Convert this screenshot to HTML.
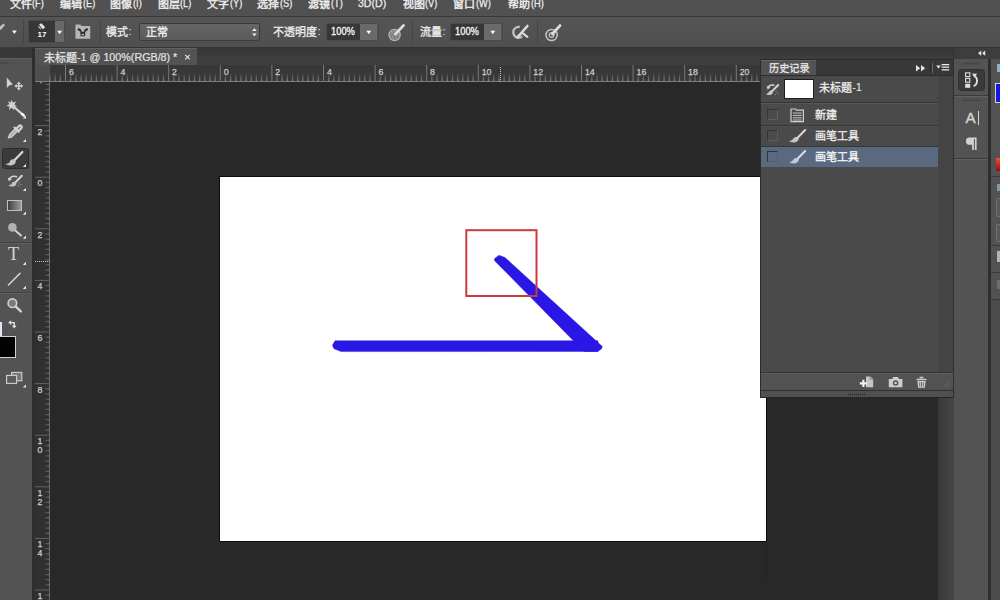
<!DOCTYPE html><html lang="zh"><head><meta charset="utf-8"><title>Photoshop</title><style>
*{margin:0;padding:0;box-sizing:border-box}
html,body{width:1000px;height:600px;overflow:hidden;background:#282828}
body{position:relative;font-family:"Liberation Sans",sans-serif;color:#e6e6e6;font-size:11px}
.a{position:absolute}
.t{position:absolute;overflow:visible}
.lt{position:absolute;white-space:nowrap;line-height:1}
.t text{font-family:"Liberation Sans","Noto Sans CJK SC",sans-serif}
</style></head><body>
<div class="a" style="left:0px;top:0px;width:1000px;height:16px;background:#515151;"></div>
<div class="a" style="left:0px;top:15.6px;width:1000px;height:1.2px;background:#383838;"></div>
<svg class="t" aria-label="文件" style="left:9.80px;top:-2.80px" width="24.00" height="15.40" viewBox="0 -11.00 24.00 15.40" ><text x="0" y="0" font-size="11" fill="#ececec" stroke="#ececec" stroke-width="0.45">文件</text></svg>
<div class="lt" style="left:32.4px;top:-1.755px;font-size:11px;color:#ececec;-webkit-text-stroke:0.3px #ececec;transform:scaleX(0.84);transform-origin:0 0">(F)</div>
<svg class="t" aria-label="编辑" style="left:60.00px;top:-2.80px" width="24.00" height="15.40" viewBox="0 -11.00 24.00 15.40" ><text x="0" y="0" font-size="11" fill="#ececec" stroke="#ececec" stroke-width="0.45">编辑</text></svg>
<div class="lt" style="left:82.6px;top:-1.755px;font-size:11px;color:#ececec;-webkit-text-stroke:0.3px #ececec;transform:scaleX(0.84);transform-origin:0 0">(E)</div>
<svg class="t" aria-label="图像" style="left:110.00px;top:-2.80px" width="24.00" height="15.40" viewBox="0 -11.00 24.00 15.40" ><text x="0" y="0" font-size="11" fill="#ececec" stroke="#ececec" stroke-width="0.45">图像</text></svg>
<div class="lt" style="left:132.6px;top:-1.755px;font-size:11px;color:#ececec;-webkit-text-stroke:0.3px #ececec;transform:scaleX(0.84);transform-origin:0 0">(I)</div>
<svg class="t" aria-label="图层" style="left:157.50px;top:-2.80px" width="24.00" height="15.40" viewBox="0 -11.00 24.00 15.40" ><text x="0" y="0" font-size="11" fill="#ececec" stroke="#ececec" stroke-width="0.45">图层</text></svg>
<div class="lt" style="left:180.1px;top:-1.755px;font-size:11px;color:#ececec;-webkit-text-stroke:0.3px #ececec;transform:scaleX(0.84);transform-origin:0 0">(L)</div>
<svg class="t" aria-label="文字" style="left:207.00px;top:-2.80px" width="24.00" height="15.40" viewBox="0 -11.00 24.00 15.40" ><text x="0" y="0" font-size="11" fill="#ececec" stroke="#ececec" stroke-width="0.45">文字</text></svg>
<div class="lt" style="left:229.6px;top:-1.755px;font-size:11px;color:#ececec;-webkit-text-stroke:0.3px #ececec;transform:scaleX(0.84);transform-origin:0 0">(Y)</div>
<svg class="t" aria-label="选择" style="left:257.00px;top:-2.80px" width="24.00" height="15.40" viewBox="0 -11.00 24.00 15.40" ><text x="0" y="0" font-size="11" fill="#ececec" stroke="#ececec" stroke-width="0.45">选择</text></svg>
<div class="lt" style="left:279.6px;top:-1.755px;font-size:11px;color:#ececec;-webkit-text-stroke:0.3px #ececec;transform:scaleX(0.84);transform-origin:0 0">(S)</div>
<svg class="t" aria-label="滤镜" style="left:308.00px;top:-2.80px" width="24.00" height="15.40" viewBox="0 -11.00 24.00 15.40" ><text x="0" y="0" font-size="11" fill="#ececec" stroke="#ececec" stroke-width="0.45">滤镜</text></svg>
<div class="lt" style="left:330.6px;top:-1.755px;font-size:11px;color:#ececec;-webkit-text-stroke:0.3px #ececec;transform:scaleX(0.84);transform-origin:0 0">(T)</div>
<div class="lt" style="left:358px;top:-1.755px;font-size:11px;color:#ececec;-webkit-text-stroke:0.3px #ececec;transform:scaleX(0.96);transform-origin:0 0">3D(D)</div>
<svg class="t" aria-label="视图" style="left:402.50px;top:-2.80px" width="24.00" height="15.40" viewBox="0 -11.00 24.00 15.40" ><text x="0" y="0" font-size="11" fill="#ececec" stroke="#ececec" stroke-width="0.45">视图</text></svg>
<div class="lt" style="left:425.1px;top:-1.755px;font-size:11px;color:#ececec;-webkit-text-stroke:0.3px #ececec;transform:scaleX(0.84);transform-origin:0 0">(V)</div>
<svg class="t" aria-label="窗口" style="left:453.00px;top:-2.80px" width="24.00" height="15.40" viewBox="0 -11.00 24.00 15.40" ><text x="0" y="0" font-size="11" fill="#ececec" stroke="#ececec" stroke-width="0.45">窗口</text></svg>
<div class="lt" style="left:475.6px;top:-1.755px;font-size:11px;color:#ececec;-webkit-text-stroke:0.3px #ececec;transform:scaleX(0.84);transform-origin:0 0">(W)</div>
<svg class="t" aria-label="帮助" style="left:508.00px;top:-2.80px" width="24.00" height="15.40" viewBox="0 -11.00 24.00 15.40" ><text x="0" y="0" font-size="11" fill="#ececec" stroke="#ececec" stroke-width="0.45">帮助</text></svg>
<div class="lt" style="left:530.6px;top:-1.755px;font-size:11px;color:#ececec;-webkit-text-stroke:0.3px #ececec;transform:scaleX(0.84);transform-origin:0 0">(H)</div>
<div class="a" style="left:0px;top:16.8px;width:1000px;height:31px;background:linear-gradient(#555,#4f4f4f);"></div>
<div class="a" style="left:0px;top:46.6px;width:1000px;height:1.2px;background:#333;"></div>
<div class="a" style="left:22.5px;top:20px;width:1px;height:24px;background:#464646;"></div>
<div class="a" style="left:28px;top:20px;width:37px;height:23px;background:transparent;border:1px solid #494949;border-radius:2px"></div>
<div class="a" style="left:29px;top:21px;width:26px;height:21px;background:#373737;"></div>
<div class="lt" style="left:37.6px;top:31.26px;font-size:8px;color:#fff;font-weight:bold">17</div>
<div class="a" style="left:55px;top:21px;width:9px;height:21px;background:#696969;"></div>
<div class="a" style="left:99.5px;top:20px;width:1px;height:24px;background:#464646;"></div>
<svg class="t" aria-label="模式" style="left:106.00px;top:25.00px" width="24.00" height="15.40" viewBox="0 -11.00 24.00 15.40" ><text x="0" y="0" font-size="11" fill="#ececec" stroke="#ececec" stroke-width="0.3">模式</text></svg>
<div class="lt" style="left:128.6px;top:26.045px;font-size:11px;color:#ececec;">:</div>
<div class="a" style="left:139px;top:23px;width:121px;height:18px;background:linear-gradient(#666,#5a5a5a);border:1px solid #3b3b3b;border-radius:2px"></div>
<svg class="t" aria-label="正常" style="left:146.20px;top:25.00px" width="24.00" height="15.40" viewBox="0 -11.00 24.00 15.40" ><text x="0" y="0" font-size="11" fill="#f0f0f0" stroke="#f0f0f0" stroke-width="0.3">正常</text></svg>
<svg class="t" aria-label="不透明度" style="left:272.80px;top:25.00px" width="46.00" height="15.40" viewBox="0 -11.00 46.00 15.40" ><text x="0" y="0" font-size="11" fill="#ececec" stroke="#ececec" stroke-width="0.3">不透明度</text></svg>
<div class="lt" style="left:317.8px;top:26.045px;font-size:11px;color:#ececec;">:</div>
<div class="a" style="left:326.2px;top:22.5px;width:52.4px;height:18.8px;background:transparent;border:1px solid #4a4a4a;border-radius:2px"></div>
<div class="a" style="left:327.2px;top:23.5px;width:33px;height:16.8px;background:#373737;"></div>
<div class="lt" style="left:331.4px;top:26.688px;font-size:10.4px;color:#f8f8f8;-webkit-text-stroke:0.3px #f8f8f8;transform:scaleX(0.9);transform-origin:0 0">100%</div>
<div class="a" style="left:360.2px;top:23.5px;width:17.2px;height:16.8px;background:#6a6a6a;"></div>
<div class="a" style="left:412px;top:20px;width:1px;height:24px;background:#464646;"></div>
<svg class="t" aria-label="流量" style="left:420.00px;top:25.00px" width="24.00" height="15.40" viewBox="0 -11.00 24.00 15.40" ><text x="0" y="0" font-size="11" fill="#ececec" stroke="#ececec" stroke-width="0.3">流量</text></svg>
<div class="lt" style="left:442.6px;top:26.045px;font-size:11px;color:#ececec;">:</div>
<div class="a" style="left:450.2px;top:22.5px;width:52.4px;height:18.8px;background:transparent;border:1px solid #4a4a4a;border-radius:2px"></div>
<div class="a" style="left:451.2px;top:23.5px;width:33px;height:16.8px;background:#373737;"></div>
<div class="lt" style="left:455.4px;top:26.688px;font-size:10.4px;color:#f8f8f8;-webkit-text-stroke:0.3px #f8f8f8;transform:scaleX(0.9);transform-origin:0 0">100%</div>
<div class="a" style="left:484.2px;top:23.5px;width:17.2px;height:16.8px;background:#6a6a6a;"></div>
<div class="a" style="left:537px;top:20px;width:1px;height:24px;background:#464646;"></div>
<div class="a" style="left:0px;top:47.8px;width:1000px;height:17.2px;background:linear-gradient(#363636,#3e3e3e 60%);"></div>
<div class="a" style="left:35px;top:48px;width:162px;height:17px;background:#535353;border-top:1px solid #626262"></div>
<svg class="t" aria-label="未标题" style="left:43.60px;top:50.90px" width="35.00" height="15.40" viewBox="0 -11.00 35.00 15.40" ><text x="0" y="0" font-size="11" fill="#e4e4e4" stroke="#e4e4e4" stroke-width="0.3">未标题</text></svg>
<div class="lt" style="left:77.4px;top:51.945px;font-size:11px;color:#e4e4e4;-webkit-text-stroke:0.2px #e4e4e4;transform:scaleX(0.975);transform-origin:0 0">-1 @ 100%(RGB/8) *</div>
<div class="a" style="left:0px;top:47px;width:32px;height:12px;background:#393939;"></div>
<div class="a" style="left:0px;top:58px;width:32px;height:542px;background:#535353;"></div>
<div class="a" style="left:0px;top:58px;width:32px;height:1px;background:#5f5f5f;"></div>
<div class="a" style="left:32px;top:47px;width:3px;height:553px;background:#2e2e2e;"></div>
<div class="a" style="left:1.5px;top:147.5px;width:27.5px;height:21px;background:#3b3b3b;border:1px solid #2d2d2d;border-radius:2.5px"></div>
<div class="a" style="left:0px;top:242px;width:32px;height:1px;background:#424242;"></div>
<div class="a" style="left:0px;top:243px;width:32px;height:1px;background:#5d5d5d;"></div>
<div class="a" style="left:0px;top:291.5px;width:32px;height:1px;background:#424242;"></div>
<div class="a" style="left:0px;top:292.5px;width:32px;height:1px;background:#5d5d5d;"></div>
<div class="a" style="left:7px;top:200px;width:15px;height:11.4px;border:1px solid #bebebe;background:linear-gradient(90deg,#404040,#9c9c9c)"></div>
<div class="lt" style="left:8.2px;top:245.4px;font-family:'Liberation Serif',serif;font-size:18.5px;color:#d6d6d6;transform:scaleX(0.98);transform-origin:0 0">T</div>
<div class="a" style="left:0px;top:321.6px;width:2px;height:22px;background:#e6e2f6;"></div>
<div class="a" style="left:-1px;top:336px;width:16.8px;height:22.4px;background:#020202;border:1px solid #d2d0c4"></div>
<div class="a" style="left:35px;top:65px;width:903px;height:17px;background:#383838;"></div>
<div class="a" style="left:35px;top:65px;width:15px;height:535px;background:#303030;"></div>
<div class="a" style="left:35px;top:65px;width:15px;height:16px;background:#4e4e4e;"></div>
<div class="a" style="left:35px;top:81px;width:903px;height:1px;background:#7e7e7e;"></div>
<div class="a" style="left:49px;top:82px;width:1px;height:518px;background:#6c6c6c;"></div>
<svg class="t" style="left:50px;top:65px" width="888" height="17" viewBox="50 65 888 17"><defs><linearGradient id="gh" gradientUnits="userSpaceOnUse" x1="0" y1="72" x2="0" y2="81"><stop offset="0" stop-color="#6a6a6a" stop-opacity="0"/><stop offset="1" stop-color="#808080"/></linearGradient></defs><path d="M65.50 65V82M117.10 65V82M168.70 65V82M220.30 65V82M271.90 65V82M323.50 65V82M375.10 65V82M426.70 65V82M478.30 65V82M529.90 65V82M581.50 65V82M633.10 65V82M684.70 65V82M736.30 65V82M787.90 65V82M839.50 65V82M891.10 65V82" stroke="#787878" stroke-width="1" fill="none"/><path d="M91.30 72V82M142.90 72V82M194.50 72V82M246.10 72V82M297.70 72V82M349.30 72V82M400.90 72V82M452.50 72V82M504.10 72V82M555.70 72V82M607.30 72V82M658.90 72V82M710.50 72V82M762.10 72V82M813.70 72V82M865.30 72V82M916.90 72V82" stroke="url(#gh)" stroke-width="1.3" fill="none"/><path d="M50.02 73.5V82M55.18 73.5V82M60.34 73.5V82M70.66 73.5V82M75.82 73.5V82M80.98 73.5V82M86.14 73.5V82M96.46 73.5V82M101.62 73.5V82M106.78 73.5V82M111.94 73.5V82M122.26 73.5V82M127.42 73.5V82M132.58 73.5V82M137.74 73.5V82M148.06 73.5V82M153.22 73.5V82M158.38 73.5V82M163.54 73.5V82M173.86 73.5V82M179.02 73.5V82M184.18 73.5V82M189.34 73.5V82M199.66 73.5V82M204.82 73.5V82M209.98 73.5V82M215.14 73.5V82M225.46 73.5V82M230.62 73.5V82M235.78 73.5V82M240.94 73.5V82M251.26 73.5V82M256.42 73.5V82M261.58 73.5V82M266.74 73.5V82M277.06 73.5V82M282.22 73.5V82M287.38 73.5V82M292.54 73.5V82M302.86 73.5V82M308.02 73.5V82M313.18 73.5V82M318.34 73.5V82M328.66 73.5V82M333.82 73.5V82M338.98 73.5V82M344.14 73.5V82M354.46 73.5V82M359.62 73.5V82M364.78 73.5V82M369.94 73.5V82M380.26 73.5V82M385.42 73.5V82M390.58 73.5V82M395.74 73.5V82M406.06 73.5V82M411.22 73.5V82M416.38 73.5V82M421.54 73.5V82M431.86 73.5V82M437.02 73.5V82M442.18 73.5V82M447.34 73.5V82M457.66 73.5V82M462.82 73.5V82M467.98 73.5V82M473.14 73.5V82M483.46 73.5V82M488.62 73.5V82M493.78 73.5V82M498.94 73.5V82M509.26 73.5V82M514.42 73.5V82M519.58 73.5V82M524.74 73.5V82M535.06 73.5V82M540.22 73.5V82M545.38 73.5V82M550.54 73.5V82M560.86 73.5V82M566.02 73.5V82M571.18 73.5V82M576.34 73.5V82M586.66 73.5V82M591.82 73.5V82M596.98 73.5V82M602.14 73.5V82M612.46 73.5V82M617.62 73.5V82M622.78 73.5V82M627.94 73.5V82M638.26 73.5V82M643.42 73.5V82M648.58 73.5V82M653.74 73.5V82M664.06 73.5V82M669.22 73.5V82M674.38 73.5V82M679.54 73.5V82M689.86 73.5V82M695.02 73.5V82M700.18 73.5V82M705.34 73.5V82M715.66 73.5V82M720.82 73.5V82M725.98 73.5V82M731.14 73.5V82M741.46 73.5V82M746.62 73.5V82M751.78 73.5V82M756.94 73.5V82M767.26 73.5V82M772.42 73.5V82M777.58 73.5V82M782.74 73.5V82M793.06 73.5V82M798.22 73.5V82M803.38 73.5V82M808.54 73.5V82M818.86 73.5V82M824.02 73.5V82M829.18 73.5V82M834.34 73.5V82M844.66 73.5V82M849.82 73.5V82M854.98 73.5V82M860.14 73.5V82M870.46 73.5V82M875.62 73.5V82M880.78 73.5V82M885.94 73.5V82M896.26 73.5V82M901.42 73.5V82M906.58 73.5V82M911.74 73.5V82M922.06 73.5V82M927.22 73.5V82M932.38 73.5V82" stroke="url(#gh)" stroke-width="1.3" fill="none"/><path d="M500.5 67V82" stroke="#c4c4c4" stroke-width="1" stroke-dasharray="1 1" fill="none" shape-rendering="crispEdges"/></svg>
<div class="lt" style="left:68.9px;top:67.836px;font-size:8.8px;color:#cecece;-webkit-text-stroke:0.25px #cecece">6</div>
<div class="lt" style="left:120.5px;top:67.836px;font-size:8.8px;color:#cecece;-webkit-text-stroke:0.25px #cecece">4</div>
<div class="lt" style="left:172.1px;top:67.836px;font-size:8.8px;color:#cecece;-webkit-text-stroke:0.25px #cecece">2</div>
<div class="lt" style="left:223.7px;top:67.836px;font-size:8.8px;color:#cecece;-webkit-text-stroke:0.25px #cecece">0</div>
<div class="lt" style="left:275.3px;top:67.836px;font-size:8.8px;color:#cecece;-webkit-text-stroke:0.25px #cecece">2</div>
<div class="lt" style="left:326.9px;top:67.836px;font-size:8.8px;color:#cecece;-webkit-text-stroke:0.25px #cecece">4</div>
<div class="lt" style="left:378.5px;top:67.836px;font-size:8.8px;color:#cecece;-webkit-text-stroke:0.25px #cecece">6</div>
<div class="lt" style="left:430.1px;top:67.836px;font-size:8.8px;color:#cecece;-webkit-text-stroke:0.25px #cecece">8</div>
<div class="lt" style="left:481.7px;top:67.836px;font-size:8.8px;color:#cecece;-webkit-text-stroke:0.25px #cecece">10</div>
<div class="lt" style="left:533.3px;top:67.836px;font-size:8.8px;color:#cecece;-webkit-text-stroke:0.25px #cecece">12</div>
<div class="lt" style="left:584.9px;top:67.836px;font-size:8.8px;color:#cecece;-webkit-text-stroke:0.25px #cecece">14</div>
<div class="lt" style="left:636.5px;top:67.836px;font-size:8.8px;color:#cecece;-webkit-text-stroke:0.25px #cecece">16</div>
<div class="lt" style="left:688.1px;top:67.836px;font-size:8.8px;color:#cecece;-webkit-text-stroke:0.25px #cecece">18</div>
<div class="lt" style="left:739.7px;top:67.836px;font-size:8.8px;color:#cecece;-webkit-text-stroke:0.25px #cecece">20</div>
<svg class="t" style="left:35px;top:82px" width="15" height="518" viewBox="35 82 15 518"><defs><linearGradient id="gv" gradientUnits="userSpaceOnUse" x1="43" y1="0" x2="49" y2="0"><stop offset="0" stop-color="#606060" stop-opacity="0"/><stop offset="1" stop-color="#6c6c6c"/></linearGradient></defs><path d="M35 125.60H50M35 177.20H50M35 228.80H50M35 280.40H50M35 332.00H50M35 383.60H50M35 435.20H50M35 486.80H50M35 538.40H50M35 590.00H50" stroke="#636363" stroke-width="1" fill="none"/><path d="M43 99.80H50M43 151.40H50M43 203.00H50M43 254.60H50M43 306.20H50M43 357.80H50M43 409.40H50M43 461.00H50M43 512.60H50M43 564.20H50" stroke="url(#gv)" stroke-width="1.3" fill="none"/><path d="M44.5 84.32H50M44.5 89.48H50M44.5 94.64H50M44.5 104.96H50M44.5 110.12H50M44.5 115.28H50M44.5 120.44H50M44.5 130.76H50M44.5 135.92H50M44.5 141.08H50M44.5 146.24H50M44.5 156.56H50M44.5 161.72H50M44.5 166.88H50M44.5 172.04H50M44.5 182.36H50M44.5 187.52H50M44.5 192.68H50M44.5 197.84H50M44.5 208.16H50M44.5 213.32H50M44.5 218.48H50M44.5 223.64H50M44.5 233.96H50M44.5 239.12H50M44.5 244.28H50M44.5 249.44H50M44.5 259.76H50M44.5 264.92H50M44.5 270.08H50M44.5 275.24H50M44.5 285.56H50M44.5 290.72H50M44.5 295.88H50M44.5 301.04H50M44.5 311.36H50M44.5 316.52H50M44.5 321.68H50M44.5 326.84H50M44.5 337.16H50M44.5 342.32H50M44.5 347.48H50M44.5 352.64H50M44.5 362.96H50M44.5 368.12H50M44.5 373.28H50M44.5 378.44H50M44.5 388.76H50M44.5 393.92H50M44.5 399.08H50M44.5 404.24H50M44.5 414.56H50M44.5 419.72H50M44.5 424.88H50M44.5 430.04H50M44.5 440.36H50M44.5 445.52H50M44.5 450.68H50M44.5 455.84H50M44.5 466.16H50M44.5 471.32H50M44.5 476.48H50M44.5 481.64H50M44.5 491.96H50M44.5 497.12H50M44.5 502.28H50M44.5 507.44H50M44.5 517.76H50M44.5 522.92H50M44.5 528.08H50M44.5 533.24H50M44.5 543.56H50M44.5 548.72H50M44.5 553.88H50M44.5 559.04H50M44.5 569.36H50M44.5 574.52H50M44.5 579.68H50M44.5 584.84H50M44.5 595.16H50" stroke="url(#gv)" stroke-width="1.3" fill="none"/><path d="M35 261.5H50" stroke="#c4c4c4" stroke-width="1" stroke-dasharray="1 1" fill="none" shape-rendering="crispEdges"/></svg>
<div class="a" style="left:35px;top:82px;width:14px;height:518px;overflow:hidden">
<div class="lt" style="left:2.4px;top:-5.964px;font-size:8.8px;color:#cecece;-webkit-text-stroke:0.25px #cecece">4</div>
<div class="lt" style="left:2.4px;top:45.636px;font-size:8.8px;color:#cecece;-webkit-text-stroke:0.25px #cecece">2</div>
<div class="lt" style="left:2.4px;top:97.236px;font-size:8.8px;color:#cecece;-webkit-text-stroke:0.25px #cecece">0</div>
<div class="lt" style="left:2.4px;top:148.836px;font-size:8.8px;color:#cecece;-webkit-text-stroke:0.25px #cecece">2</div>
<div class="lt" style="left:2.4px;top:200.436px;font-size:8.8px;color:#cecece;-webkit-text-stroke:0.25px #cecece">4</div>
<div class="lt" style="left:2.4px;top:252.036px;font-size:8.8px;color:#cecece;-webkit-text-stroke:0.25px #cecece">6</div>
<div class="lt" style="left:2.4px;top:303.636px;font-size:8.8px;color:#cecece;-webkit-text-stroke:0.25px #cecece">8</div>
<div class="lt" style="left:2.4px;top:355.236px;font-size:8.8px;color:#cecece;-webkit-text-stroke:0.25px #cecece">1</div>
<div class="lt" style="left:2.4px;top:364.236px;font-size:8.8px;color:#cecece;-webkit-text-stroke:0.25px #cecece">0</div>
<div class="lt" style="left:2.4px;top:406.836px;font-size:8.8px;color:#cecece;-webkit-text-stroke:0.25px #cecece">1</div>
<div class="lt" style="left:2.4px;top:415.836px;font-size:8.8px;color:#cecece;-webkit-text-stroke:0.25px #cecece">2</div>
<div class="lt" style="left:2.4px;top:458.436px;font-size:8.8px;color:#cecece;-webkit-text-stroke:0.25px #cecece">1</div>
<div class="lt" style="left:2.4px;top:467.436px;font-size:8.8px;color:#cecece;-webkit-text-stroke:0.25px #cecece">4</div>
<div class="lt" style="left:2.4px;top:510.036px;font-size:8.8px;color:#cecece;-webkit-text-stroke:0.25px #cecece">1</div>
<div class="lt" style="left:2.4px;top:519.036px;font-size:8.8px;color:#cecece;-webkit-text-stroke:0.25px #cecece">6</div>
</div>
<div class="a" style="left:219px;top:176px;width:548px;height:366px;background:#0c0c0c;"></div>
<div class="a" style="left:766px;top:542px;width:1px;height:38px;background:#222;"></div>
<div class="a" style="left:220px;top:177px;width:546px;height:364px;background:#fff;"></div>
<svg class="t" style="left:220px;top:177px" width="546" height="364" viewBox="220 177 546 364"><path d="M335 340.7 L332.4 345.2 L334 348.8 L341 351.6 L598 351.5 L598 340.7z" fill="#2a17e6" stroke="#2a17e6" stroke-width="0.4" stroke-linejoin="round"/><path d="M499 255.2 L505 257.5 L602.4 346.6 L601.4 349 L597.8 351.5 L584 351.5 L494.3 260.4 L494.7 258.4z" fill="#2a17e6" stroke="#2a17e6" stroke-width="0.4" stroke-linejoin="round"/><rect x="466.3" y="230.2" width="70.2" height="65.8" fill="none" stroke="#cb3b40" stroke-width="2"/></svg>
<div class="a" style="left:938px;top:59px;width:16px;height:541px;background:linear-gradient(90deg,#383838,#464646);"></div>
<div class="a" style="left:953px;top:47.8px;width:47px;height:11.2px;background:#3d3d3d;"></div>
<div class="a" style="left:954px;top:59px;width:34px;height:541px;background:#535353;"></div>
<div class="a" style="left:988px;top:59px;width:3px;height:541px;background:#2e2e2e;"></div>
<div class="a" style="left:991px;top:59px;width:9px;height:541px;background:#4c4c4c;"></div>
<div class="a" style="left:991px;top:59px;width:9px;height:240px;background:#525252;"></div>
<div class="a" style="left:991px;top:299px;width:9px;height:1px;background:#3a3a3a;"></div>
<div class="a" style="left:953px;top:47px;width:1px;height:351px;background:#2f2f2f;"></div>
<div class="a" style="left:958px;top:69px;width:26.6px;height:21.8px;background:#3a3a3a;border-radius:3.5px;border:1px solid #303030"></div>
<div class="a" style="left:954px;top:94.6px;width:34px;height:1px;background:#3a3a3a;"></div>
<div class="a" style="left:954px;top:95.6px;width:34px;height:1px;background:#616161;"></div>
<div class="a" style="left:954px;top:157.6px;width:34px;height:1px;background:#3a3a3a;"></div>
<div class="a" style="left:954px;top:158.6px;width:34px;height:1px;background:#616161;"></div>
<div class="lt" style="left:965.4px;top:109.644px;font-size:15.2px;color:#d2d2d2;-webkit-text-stroke:0.45px #d2d2d2">A</div>
<div class="a" style="left:977.6px;top:111.4px;width:1.1px;height:13.4px;background:#d4d4d4;"></div>
<div class="a" style="left:996.6px;top:64px;width:3.4px;height:8px;background:#8eb0c8;"></div>
<div class="a" style="left:995px;top:83.2px;width:5px;height:19.6px;background:#1616e2;border:1px solid #d6d6c6;border-right:0"></div>
<div class="a" style="left:996px;top:158px;width:4px;height:13px;background:linear-gradient(#e8503c,#9c0c0c);"></div>
<div class="a" style="left:991px;top:176px;width:9px;height:1px;background:#3a3a3a;"></div>
<div class="a" style="left:991px;top:245px;width:9px;height:1px;background:#3a3a3a;"></div>
<div class="a" style="left:991px;top:272px;width:9px;height:1px;background:#3a3a3a;"></div>
<div class="a" style="left:996.6px;top:184px;width:3.4px;height:7px;background:#7d96a8;"></div>
<div class="a" style="left:995.6px;top:197.6px;width:6px;height:19px;background:#595959;border:1px solid #727272;border-radius:1.5px"></div>
<div class="a" style="left:995.6px;top:223.6px;width:6px;height:18px;background:#595959;border:1px solid #727272;border-radius:1.5px"></div>
<div class="a" style="left:997px;top:250.6px;width:3px;height:11px;background:#b4b4b4;"></div>
<div class="a" style="left:997.4px;top:280px;width:2.6px;height:9px;background:#6e6e6e;"></div>
<div class="a" style="left:761px;top:59px;width:192px;height:339px;background:#4a4a4a;"></div>
<div class="a" style="left:760px;top:59px;width:1px;height:339px;background:#2c2c2c;"></div>
<div class="a" style="left:761px;top:59px;width:192px;height:17px;background:#383838;border-top:1px solid #2a2a2a"></div>
<div class="a" style="left:761px;top:60px;width:55px;height:16px;background:#535353;border-top:1px solid #646464"></div>
<svg class="t" aria-label="历史记录" style="left:769.40px;top:62.20px" width="42.80" height="14.28" viewBox="0 -10.20 42.80 14.28" ><text x="0" y="0" font-size="10.2" fill="#e6e6e6" stroke="#e6e6e6" stroke-width="0.3">历史记录</text></svg>
<div class="a" style="left:930.4px;top:63px;width:1px;height:10px;background:#2a2a2a;"></div>
<div class="a" style="left:931.6px;top:63px;width:1px;height:10px;background:#686868;"></div>
<div class="a" style="left:938px;top:76px;width:15px;height:297px;background:#444;"></div>
<div class="a" style="left:761px;top:75px;width:192px;height:1px;background:#2c2c2c;"></div>
<div class="a" style="left:761px;top:102.4px;width:177px;height:1px;background:#363636;"></div>
<div class="a" style="left:761px;top:103.4px;width:177px;height:1px;background:#575757;"></div>
<div class="a" style="left:761px;top:125px;width:177px;height:1px;background:#363636;"></div>
<div class="a" style="left:761px;top:126px;width:177px;height:1px;background:#525252;"></div>
<div class="a" style="left:761px;top:146px;width:177px;height:1px;background:#363636;"></div>
<div class="a" style="left:761px;top:147px;width:177px;height:20.4px;background:#596a80;"></div>
<div class="a" style="left:784px;top:79px;width:29.6px;height:19.6px;background:#fff;border:1px solid #1e1e1e"></div>
<svg class="t" aria-label="未标题" style="left:819.00px;top:81.20px" width="35.00" height="15.40" viewBox="0 -11.00 35.00 15.40" ><text x="0" y="0" font-size="11" fill="#ececec" stroke="#ececec" stroke-width="0.3">未标题</text></svg>
<div class="lt" style="left:852.2px;top:82.245px;font-size:11px;color:#ececec;">-1</div>
<div class="a" style="left:767px;top:109px;width:10.6px;height:11px;background:transparent;border:1px solid #343434;border-right-color:#5e5e5e;border-bottom-color:#5e5e5e"></div>
<div class="a" style="left:767px;top:130px;width:10.6px;height:11px;background:transparent;border:1px solid #343434;border-right-color:#5e5e5e;border-bottom-color:#5e5e5e"></div>
<div class="a" style="left:767px;top:151px;width:10.6px;height:11px;background:transparent;border:1px solid #343434;border-right-color:#5e5e5e;border-bottom-color:#5e5e5e"></div>
<svg class="t" aria-label="新建" style="left:815.00px;top:107.80px" width="24.00" height="15.40" viewBox="0 -11.00 24.00 15.40" ><text x="0" y="0" font-size="11" fill="#ececec" stroke="#ececec" stroke-width="0.3">新建</text></svg>
<svg class="t" aria-label="画笔工具" style="left:815.00px;top:128.80px" width="46.00" height="15.40" viewBox="0 -11.00 46.00 15.40" ><text x="0" y="0" font-size="11" fill="#ececec" stroke="#ececec" stroke-width="0.3">画笔工具</text></svg>
<svg class="t" aria-label="画笔工具" style="left:815.00px;top:149.80px" width="46.00" height="15.40" viewBox="0 -11.00 46.00 15.40" ><text x="0" y="0" font-size="11" fill="#f6f6f6" stroke="#f6f6f6" stroke-width="0.3">画笔工具</text></svg>
<div class="a" style="left:761px;top:372.4px;width:192px;height:1px;background:#363636;"></div>
<div class="a" style="left:761px;top:373.4px;width:192px;height:17px;background:#525252;border-top:1px solid #5e5e5e"></div>
<div class="a" style="left:760px;top:390.4px;width:193px;height:7.6px;background:#505050;border-top:1px solid #303030;border-bottom:1px solid #262626;border-left:1px solid #2c2c2c"></div>
<svg class="t" style="left:0;top:0" width="1000" height="600" viewBox="0 0 1000 600"><path d="M0 26.6 L3.4 23.4 L5 25 L1 29.8 H0z" fill="#c0c0c0"/><path d="M12 30.6 h4.8 l-2.4 3.4z" fill="#f2f2f2"/><path d="M39 24.6 L41.4 23.2 L45.2 27.2 L42.8 29.2z" fill="#e4e4e4"/><path d="M38.4 26.4 l2.6 2.8" stroke="#bdbdbd" stroke-width="1.2"/><path d="M57.2 30.8 h4.8 l-2.4 3.4z" fill="#fff"/><path d="M75.4 24.5 h5 l1 1.6 h8.8 v12.7 h-14.8z" fill="#b6b6b6"/><path d="M78.2 28 l2.6 1.2 l0.9 2.6 h2.2 l0.9 -2.6 l2.6 -1.2 l0.6 2 l-2.5 1.5 l-0.4 2.2 v2.6 h-4.6 v-2.6 l-0.4 -2.2 l-2.5 -1.5z" fill="#2e2e2e"/><rect x="81.6" y="33.8" width="2.4" height="1.6" fill="#b6b6b6"/><path d="M254.4 28.2 L256.8 31 H252z M254.4 36.2 L256.8 33.4 H252z" fill="#ececec"/><path d="M366.4 30.8 h4.8 l-2.4 3.4z" fill="#fff"/><circle cx="394.6" cy="35" r="5.6" fill="#7c7c7c" stroke="#b4b4b4" stroke-width="1.3"/><path d="M392 32.5 l5 5 M390.5 35.5 l3.6 3.6 M394.5 31 l4 4 M397 32 l-5 5 M399 34.5 l-4.5 4.5 M394.5 30.5 l-4 4" stroke="#a8a8a8" stroke-width="0.6"/><path d="M395.4 34 L403.6 25.4" stroke="#dcdcdc" stroke-width="2.8" stroke-linecap="round"/><path d="M490.4 30.8 h4.8 l-2.4 3.4z" fill="#fff"/><path d="M519.8 27 a5.4 5.4 0 1 0 2.4 9.4" fill="none" stroke="#bebebe" stroke-width="2.3"/><path d="M517.4 37.4 L527.4 26" stroke="#dadada" stroke-width="2.6" stroke-linecap="round"/><path d="M522 32.6 l5.4 4.2" stroke="#dadada" stroke-width="2.1" stroke-linecap="round"/><circle cx="551.6" cy="35" r="5.6" fill="none" stroke="#c2c2c2" stroke-width="1.5"/><circle cx="551.6" cy="35" r="2.3" fill="none" stroke="#c2c2c2" stroke-width="1.3"/><path d="M552.4 34 L560 25.6" stroke="#dcdcdc" stroke-width="2.8" stroke-linecap="round"/><path d="M185.2 54.8 L189.8 59.4 M189.8 54.8 L185.2 59.4" stroke="#e0e0e0" stroke-width="1.2"/><path d="M0 63 h8.5" stroke="#3a3a3a" stroke-width="1.6" stroke-dasharray="1 1"/><path d="M6.8 77.6 V88 L9.2 85.6 L12.8 84.4z" fill="#d2d2d2"/><path d="M16 86 H21.6 M18.8 83.2 V88.8" stroke="#d2d2d2" stroke-width="1.5"/><path d="M18.8 81.6 l2 2.3 h-4z M18.8 90.4 l2 -2.3 h-4z M14.4 86 l2.3 -2 v4z M23.2 86 l-2.3 -2 v4z" fill="#d2d2d2"/><path d="M11.6 99.6 l1.2 3 l3.2 -1 l-1.6 2.8 l2.6 1.8 l-3.2 0.6 l0.2 3.4 l-2.4 -2.4 l-2.6 2.2 l0.6 -3.2 l-3.2 -1 l3 -1.6 l-1.4 -3 l2.8 1.4z" fill="#d2d2d2"/><path d="M14 107 L23.4 115.2" stroke="#d2d2d2" stroke-width="2.2" stroke-linecap="round"/><path d="M22 114 l1.8 1.6" stroke="#fff" stroke-width="2.4" stroke-linecap="round"/><path d="M26 115.4 v3.2 h-3.2z" fill="#e6e6e6"/><path d="M8.4 138 L9.4 134.6 L15.6 128.4 L18 130.8 L11.8 137z" fill="#b4b4b4" stroke="#d2d2d2" stroke-width="1.1"/><path d="M14.6 127.6 L18.8 131.8 M16 129 L19 126 a1.5 1.5 0 0 1 2.2 2.2 L18.2 131.2" stroke="#d2d2d2" stroke-width="2.3" stroke-linecap="round" fill="none"/><path d="M26 138.9 v3.2 h-3.2z" fill="#e6e6e6"/><path d="M22.4 152 L14.4 160.2" stroke="#d8d8d8" stroke-width="2.3" stroke-linecap="round"/><g transform="translate(14 159.6) scale(1)"><path d="M0 0 c-1.6 -0.6 -3.2 0 -4 1.6 c-0.8 1.8 -2.4 2.6 -4.6 2.8 c2 1.6 6 2 8.4 0.6 c1.8 -1.2 2.4 -3 1.6 -4.2z" fill="#c4c4c4"/></g><path d="M26 163.9 v3.2 h-3.2z" fill="#e6e6e6"/><path d="M21.8 175.8 L15.4 182.36" stroke="#d8d8d8" stroke-width="2.05718" stroke-linecap="round"/><g transform="translate(15.08 181.88) scale(0.8)"><path d="M0 0 c-1.6 -0.6 -3.2 0 -4 1.6 c-0.8 1.8 -2.4 2.6 -4.6 2.8 c2 1.6 6 2 8.4 0.6 c1.8 -1.2 2.4 -3 1.6 -4.2z" fill="#c4c4c4"/></g><path d="M9.6 179.4 a4.6 3.4 0 0 1 7.4 -2.4" fill="none" stroke="#d2d2d2" stroke-width="1.6"/><path d="M7.8 177.4 l1 3.8 l3.2 -2z" fill="#d2d2d2"/><path d="M19.4 182.6 v0.1 M20.8 184.6 v0.1 M18.6 185.8 v0.1" stroke="#bbb" stroke-width="1" stroke-linecap="round"/><path d="M26 187.9 v3.2 h-3.2z" fill="#e6e6e6"/><path d="M26 211.6 v3.2 h-3.2z" fill="#e6e6e6"/><circle cx="12.4" cy="227.4" r="4.3" fill="#b2b2b2"/><path d="M15.6 230.8 L21 235.6" stroke="#d2d2d2" stroke-width="2" stroke-linecap="round"/><path d="M26 235.6 v3.2 h-3.2z" fill="#e6e6e6"/><path d="M26 261.8 v3.2 h-3.2z" fill="#e6e6e6"/><path d="M8.4 285 L20 273.4" stroke="#d2d2d2" stroke-width="1.5" stroke-linecap="round"/><path d="M26 285.8 v3.2 h-3.2z" fill="#e6e6e6"/><circle cx="12.4" cy="303.2" r="4.3" fill="#7a7a7a" stroke="#cfcfcf" stroke-width="1.7"/><path d="M15.8 306.6 L20.8 311.4" stroke="#d2d2d2" stroke-width="2.4" stroke-linecap="round"/><path d="M10.6 322.6 h3.6 v3.6" fill="none" stroke="#e2e2e2" stroke-width="1.4"/><path d="M8.2 322.6 l3 -2.4 v4.8z M14.2 328.6 l-2.4 -3 h4.8z" fill="#e2e2e2"/><rect x="11.6" y="372.4" width="10.2" height="8.4" fill="#777" stroke="#d0d0d0" stroke-width="1.1"/><rect x="6.6" y="375.4" width="10" height="8" fill="#5c5c5c" stroke="#d0d0d0" stroke-width="1.1"/><path d="M26 384.4 v3.2 h-3.2z" fill="#e6e6e6"/><path d="M981.2 50.6 V55.8 L978 53.2z M985.2 50.6 V55.8 L982 53.2z" fill="#e4e4e4"/><path d="M962.5 63.6 h18 M962.5 100.4 h18" stroke="#3d3d3d" stroke-width="1.8" stroke-dasharray="1 1"/><rect x="965.6" y="72.8" width="4.2" height="3.8" fill="none" stroke="#dedede" stroke-width="1.1"/><rect x="965.6" y="78.4" width="4.2" height="3.8" fill="none" stroke="#dedede" stroke-width="1.1"/><rect x="965.2" y="83.8" width="5" height="4" fill="#dedede"/><path d="M973.6 86.2 c4.2 -1.6 4.6 -7.4 1 -10.4" fill="none" stroke="#dedede" stroke-width="1.9"/><path d="M972.2 73.4 l5 0.4 l-3.2 3.8z" fill="#dedede"/><path d="M969.6 137.5 h7 v12.5 h-1.7 v-11 h-1 v11 h-1.8 v-5.2 h-2.5 a3.65 3.65 0 0 1 0 -7.3z" fill="#d2d2d2"/><path d="M916 65 V71.4 L920.2 68.2z M921 65 V71.4 L925.2 68.2z" fill="#e4e4e4"/><path d="M936.2 65.6 h4.6 l-2.3 3z" fill="#ececec"/><path d="M941.6 64.6 h7.6 M941.6 67.2 h7.6 M941.6 69.8 h7.6" stroke="#ececec" stroke-width="1.2"/><path d="M778.2 85 L772 91.4" stroke="#d4d4d4" stroke-width="2" stroke-linecap="round"/><path d="M772 90.6 c-1.4 -0.4 -2.6 0.2 -3.2 1.4 c-0.6 1.2 -1.6 1.8 -3 2 c1.6 1.2 4.6 1.4 6.2 0.2 c1.2 -1 1.4 -2.6 0 -3.6z" fill="#c8c8c8"/><path d="M768.2 87.6 a4.4 3.4 0 0 1 6.4 -2.2" fill="none" stroke="#d4d4d4" stroke-width="1.5"/><path d="M766.6 86 l1 3.4 l2.8 -2z" fill="#d4d4d4"/><path d="M776.2 91.6 v0.1 M777.8 93.4 v0.1 M775.4 94.4 v0.1" stroke="#bbb" stroke-width="0.9" stroke-linecap="round"/><path d="M791 109 h4.6 l0.8 1.2 h7 v11.4 h-12.4z" fill="none" stroke="#d0d0d0" stroke-width="1.2"/><path d="M792.8 113 h8.8 M792.8 115.4 h8.8 M792.8 117.8 h8.8 M792.8 120 h8.8" stroke="#c4c4c4" stroke-width="1"/><path d="M805.2 130 L797.6 137.8" stroke="#d6d6d6" stroke-width="2" stroke-linecap="round"/><path d="M797.2 137.2 c-1.6 -0.6 -3 0 -3.8 1.4 c-0.8 1.6 -2.2 2.2 -4.4 2.4 c2 1.6 5.8 2 8 0.6 c1.6 -1 2.2 -2.8 1.4 -4z" fill="#c6c6c6"/><path d="M805.2 151 L797.6 158.8" stroke="#d6dee6" stroke-width="2" stroke-linecap="round"/><path d="M797.2 158.2 c-1.6 -0.6 -3 0 -3.8 1.4 c-0.8 1.6 -2.2 2.2 -4.4 2.4 c2 1.6 5.8 2 8 0.6 c1.6 -1 2.2 -2.8 1.4 -4z" fill="#bfcbd6"/><path d="M848 394.4 h18" stroke="#2f2f2f" stroke-width="1.8" stroke-dasharray="1 1"/><path d="M866 376.5 h4.4 l2.8 2.8 v7.9 h-7.2z" fill="#c6c6c6"/><path d="M870.4 376.5 v2.8 h2.8" fill="none" stroke="#7c7c7c" stroke-width="0.8"/><path d="M859.8 383.4 h7.2 M863.4 379.8 v7.2" stroke="#f4f4f4" stroke-width="2.1"/><path d="M888.8 379 h3.4 l1.2 -1.9 h4.4 l1.2 1.9 h3.4 v8.3 h-13.6z" fill="#cdcdcd"/><circle cx="895.6" cy="383" r="2.8" fill="#505050"/><circle cx="895.6" cy="383" r="1.35" fill="#cdcdcd"/><path d="M916.6 379.5 h9.8 M919.6 377.6 h3.8" stroke="#cdcdcd" stroke-width="1.5"/><path d="M917.4 381 h8.2 l-0.7 6.7 h-6.8z" fill="#cdcdcd"/><path d="M919.7 382.2 v4.4 M921.5 382.2 v4.4 M923.3 382.2 v4.4" stroke="#555" stroke-width="0.8"/><path d="M950 380.5 L943.5 387 M950 383.2 L946.2 387 M950 385.8 L948.8 387" stroke="#626262" stroke-width="1"/></svg>
</body></html>
